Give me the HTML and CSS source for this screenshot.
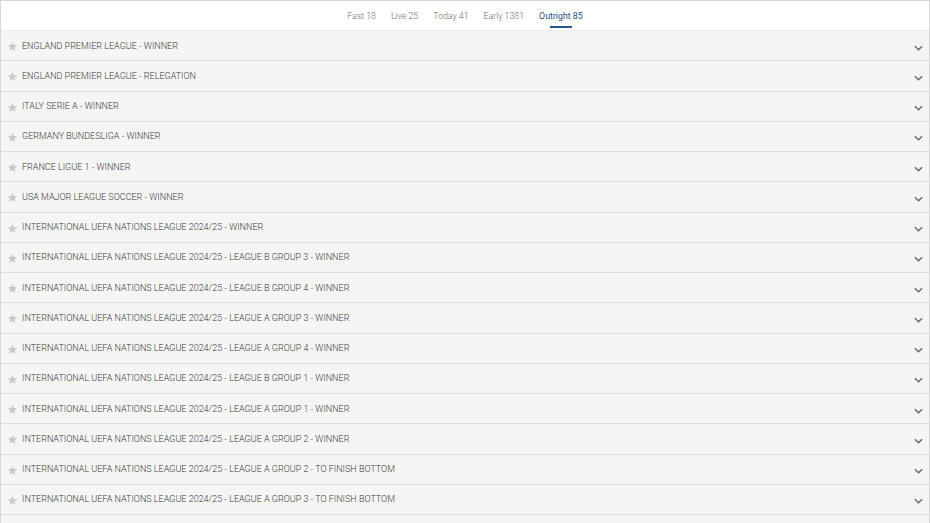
FILE: index.html
```html
<!DOCTYPE html>
<html>
<head>
<meta charset="utf-8">
<link rel="stylesheet" href="styles.css">
</head>
<body>
<div class="panel">
  <div class="tabs">
    <span class="tab">Fast 18</span>
    <span class="tab">Live 25</span>
    <span class="tab">Today 41</span>
    <span class="tab">Early 1381</span>
    <span class="tab active">Outright 85</span>
  </div>
  <ul class="list">
    <li class="row"><svg class="star" viewBox="0 0 24 24"><path d="M12 2l3 6.5 7 .8-5.2 4.8 1.4 7L12 17.6 5.8 21.1l1.4-7L2 9.3l7-.8z"/></svg><span class="name">ENGLAND PREMIER LEAGUE - WINNER</span><svg class="chev" viewBox="0 0 10 6"><path d="M1 1l4 4 4-4"/></svg></li>
    <li class="row"><svg class="star" viewBox="0 0 24 24"><path d="M12 2l3 6.5 7 .8-5.2 4.8 1.4 7L12 17.6 5.8 21.1l1.4-7L2 9.3l7-.8z"/></svg><span class="name">ENGLAND PREMIER LEAGUE - RELEGATION</span><svg class="chev" viewBox="0 0 10 6"><path d="M1 1l4 4 4-4"/></svg></li>
    <li class="row"><svg class="star" viewBox="0 0 24 24"><path d="M12 2l3 6.5 7 .8-5.2 4.8 1.4 7L12 17.6 5.8 21.1l1.4-7L2 9.3l7-.8z"/></svg><span class="name">ITALY SERIE A - WINNER</span><svg class="chev" viewBox="0 0 10 6"><path d="M1 1l4 4 4-4"/></svg></li>
    <li class="row"><svg class="star" viewBox="0 0 24 24"><path d="M12 2l3 6.5 7 .8-5.2 4.8 1.4 7L12 17.6 5.8 21.1l1.4-7L2 9.3l7-.8z"/></svg><span class="name">GERMANY BUNDESLIGA - WINNER</span><svg class="chev" viewBox="0 0 10 6"><path d="M1 1l4 4 4-4"/></svg></li>
    <li class="row"><svg class="star" viewBox="0 0 24 24"><path d="M12 2l3 6.5 7 .8-5.2 4.8 1.4 7L12 17.6 5.8 21.1l1.4-7L2 9.3l7-.8z"/></svg><span class="name">FRANCE LIGUE 1 - WINNER</span><svg class="chev" viewBox="0 0 10 6"><path d="M1 1l4 4 4-4"/></svg></li>
    <li class="row"><svg class="star" viewBox="0 0 24 24"><path d="M12 2l3 6.5 7 .8-5.2 4.8 1.4 7L12 17.6 5.8 21.1l1.4-7L2 9.3l7-.8z"/></svg><span class="name">USA MAJOR LEAGUE SOCCER - WINNER</span><svg class="chev" viewBox="0 0 10 6"><path d="M1 1l4 4 4-4"/></svg></li>
    <li class="row"><svg class="star" viewBox="0 0 24 24"><path d="M12 2l3 6.5 7 .8-5.2 4.8 1.4 7L12 17.6 5.8 21.1l1.4-7L2 9.3l7-.8z"/></svg><span class="name">INTERNATIONAL UEFA NATIONS LEAGUE 2024/25 - WINNER</span><svg class="chev" viewBox="0 0 10 6"><path d="M1 1l4 4 4-4"/></svg></li>
    <li class="row"><svg class="star" viewBox="0 0 24 24"><path d="M12 2l3 6.5 7 .8-5.2 4.8 1.4 7L12 17.6 5.8 21.1l1.4-7L2 9.3l7-.8z"/></svg><span class="name">INTERNATIONAL UEFA NATIONS LEAGUE 2024/25 - LEAGUE B GROUP 3 - WINNER</span><svg class="chev" viewBox="0 0 10 6"><path d="M1 1l4 4 4-4"/></svg></li>
    <li class="row"><svg class="star" viewBox="0 0 24 24"><path d="M12 2l3 6.5 7 .8-5.2 4.8 1.4 7L12 17.6 5.8 21.1l1.4-7L2 9.3l7-.8z"/></svg><span class="name">INTERNATIONAL UEFA NATIONS LEAGUE 2024/25 - LEAGUE B GROUP 4 - WINNER</span><svg class="chev" viewBox="0 0 10 6"><path d="M1 1l4 4 4-4"/></svg></li>
    <li class="row"><svg class="star" viewBox="0 0 24 24"><path d="M12 2l3 6.5 7 .8-5.2 4.8 1.4 7L12 17.6 5.8 21.1l1.4-7L2 9.3l7-.8z"/></svg><span class="name">INTERNATIONAL UEFA NATIONS LEAGUE 2024/25 - LEAGUE A GROUP 3 - WINNER</span><svg class="chev" viewBox="0 0 10 6"><path d="M1 1l4 4 4-4"/></svg></li>
    <li class="row"><svg class="star" viewBox="0 0 24 24"><path d="M12 2l3 6.5 7 .8-5.2 4.8 1.4 7L12 17.6 5.8 21.1l1.4-7L2 9.3l7-.8z"/></svg><span class="name">INTERNATIONAL UEFA NATIONS LEAGUE 2024/25 - LEAGUE A GROUP 4 - WINNER</span><svg class="chev" viewBox="0 0 10 6"><path d="M1 1l4 4 4-4"/></svg></li>
    <li class="row"><svg class="star" viewBox="0 0 24 24"><path d="M12 2l3 6.5 7 .8-5.2 4.8 1.4 7L12 17.6 5.8 21.1l1.4-7L2 9.3l7-.8z"/></svg><span class="name">INTERNATIONAL UEFA NATIONS LEAGUE 2024/25 - LEAGUE B GROUP 1 - WINNER</span><svg class="chev" viewBox="0 0 10 6"><path d="M1 1l4 4 4-4"/></svg></li>
    <li class="row"><svg class="star" viewBox="0 0 24 24"><path d="M12 2l3 6.5 7 .8-5.2 4.8 1.4 7L12 17.6 5.8 21.1l1.4-7L2 9.3l7-.8z"/></svg><span class="name">INTERNATIONAL UEFA NATIONS LEAGUE 2024/25 - LEAGUE A GROUP 1 - WINNER</span><svg class="chev" viewBox="0 0 10 6"><path d="M1 1l4 4 4-4"/></svg></li>
    <li class="row"><svg class="star" viewBox="0 0 24 24"><path d="M12 2l3 6.5 7 .8-5.2 4.8 1.4 7L12 17.6 5.8 21.1l1.4-7L2 9.3l7-.8z"/></svg><span class="name">INTERNATIONAL UEFA NATIONS LEAGUE 2024/25 - LEAGUE A GROUP 2 - WINNER</span><svg class="chev" viewBox="0 0 10 6"><path d="M1 1l4 4 4-4"/></svg></li>
    <li class="row"><svg class="star" viewBox="0 0 24 24"><path d="M12 2l3 6.5 7 .8-5.2 4.8 1.4 7L12 17.6 5.8 21.1l1.4-7L2 9.3l7-.8z"/></svg><span class="name">INTERNATIONAL UEFA NATIONS LEAGUE 2024/25 - LEAGUE A GROUP 2 - TO FINISH BOTTOM</span><svg class="chev" viewBox="0 0 10 6"><path d="M1 1l4 4 4-4"/></svg></li>
    <li class="row"><svg class="star" viewBox="0 0 24 24"><path d="M12 2l3 6.5 7 .8-5.2 4.8 1.4 7L12 17.6 5.8 21.1l1.4-7L2 9.3l7-.8z"/></svg><span class="name">INTERNATIONAL UEFA NATIONS LEAGUE 2024/25 - LEAGUE A GROUP 3 - TO FINISH BOTTOM</span><svg class="chev" viewBox="0 0 10 6"><path d="M1 1l4 4 4-4"/></svg></li>
    <li class="row empty"></li>
  </ul>
</div>
</body>
</html>
```

FILE: styles.css
```css
html, body {
  margin: 0;
  padding: 0;
  background: #ffffff;
  overflow: hidden;
}
body {
  font-family: Roboto, "Liberation Sans", sans-serif;
}
.panel {
  width: 930px;
  height: 523px;
  box-sizing: border-box;
  border: 1px solid #d6d6d6;
  border-bottom: none;
  overflow: hidden;
  background: #f5f5f5;
}
.tabs {
  height: 30px;
  background: #ffffff;
  display: flex;
  justify-content: center;
  gap: 15px;
  box-sizing: border-box;
  border-bottom: 1px solid #ececec;
}
.tab {
  font-size: 8.8px;
  font-weight: 300;
  color: #6e6e6e;
  line-height: 29px;
  padding-top: 1px;
  position: relative;
}
.tab.active {
  color: #2c4f82;
  font-weight: 400;
}
.tab.active::after {
  content: "";
  position: absolute;
  left: 50%;
  bottom: 2px;
  width: 22px;
  margin-left: -11px;
  height: 2.5px;
  background: #2c5591;
}
.list {
  list-style: none;
  margin: 0;
  padding: 0;
}
.row {
  height: 29.25px;
  border-bottom: 1px solid #dedede;
  display: flex;
  align-items: center;
  padding: 0 6px 0 6px;
}
.star {
  width: 11px;
  height: 11px;
  fill: #c9c9c9;
  margin-right: 4px;
  margin-top: 2px;
  flex: none;
}
.name {
  flex: 1;
  font-size: 9px;
  font-weight: 300;
  color: #3c3c3c;
}
.chev {
  width: 9px;
  height: 6px;
  fill: none;
  stroke: #6a6a6a;
  stroke-width: 1.6;
  margin-top: 4px;
  flex: none;
}
```
